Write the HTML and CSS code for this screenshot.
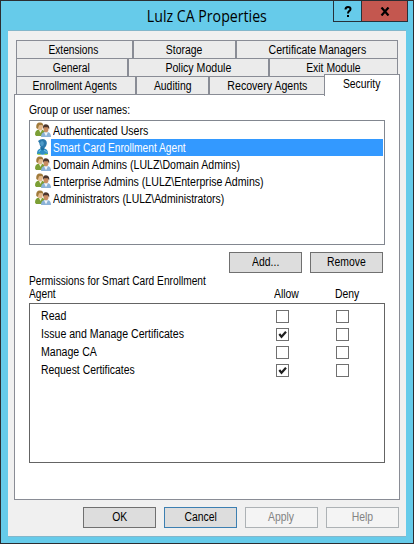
FILE: index.html
```
<!DOCTYPE html>
<html lang="en">
<head>
<meta charset="utf-8">
<title>Lulz CA Properties</title>
<link rel="stylesheet" href="styles.css">
</head>
<body>
<svg width="0" height="0" class="defs">
  <symbol id="group" viewBox="0 0 16 16">
    <path d="M0 12.500Q0 8 4 7.500h3l3 2v3.500L6 14H1z" fill="#7c9f35"/>
    <path d="M4 8l1.500 3L7 8z" fill="#eef2df"/>
    <ellipse cx="5" cy="4.600" rx="2.800" ry="3.600" fill="#e3b98c"/>
    <path d="M1.300 6Q.6.300 5 .4q4 .1 3.300 5L7.200 3 4 3.300 2.800 7z" fill="#a17a3a"/>
    <path d="M6 15q0-4.500 3.500-5h3Q16 10.500 16 15z" fill="#8bb2d8"/>
    <path d="M9 10.200l2 4 2-4z" fill="#f2f5f8"/>
    <ellipse cx="11" cy="7" rx="2.500" ry="3.200" fill="#c98d62"/>
    <path d="M8 7q-.6-4.500 3-4.700 3.900.2 3.200 5.200L12.800 5.200 9 5.300z" fill="#4a352c"/>
  </symbol>
  <symbol id="user" viewBox="0 0 16 16">
    <path d="M2 15q-.3-4.800 4-5.500h3q4.300.8 4 5.500Q7.500 16.500 2 15z" fill="#2f8fc4"/>
    <path d="M5.300 8h4.300l-.4 2.500-1.700 1-2-1z" fill="#1c6d9f"/>
    <path d="M3 2Q5 0 8 0q4 .5 3.800 4.500Q11 9 7.800 9 4.800 8.500 4.300 4z" fill="#2b78ab"/>
    <ellipse cx="7" cy="4.500" rx="1.800" ry="2.500" fill="#4f9bc8"/>
    <path d="M4 13q.6-2 2-2.200M9 11.500q2 0 3 2" stroke="#77c6e7" fill="none"/>
    <path d="M2.500 15.300h3M9.500 15.300h3" stroke="#a6d925"/>
  </symbol>
</svg>
<div class="window">
  <header class="titlebar">
    <h1><span>Lulz CA Properties</span></h1>
    <div class="controls">
      <div class="help"><svg width="8" height="11" viewBox="0 0 8 11"><path d="M1.500 3.500Q1.500 1 4 1t2.500 2Q6.500 4.200 5 5.200 4 6 4 7.500M4 9v2" fill="none" stroke="#000" stroke-width="2"/></svg></div>
      <div class="close"><svg width="10" height="9" viewBox="0 0 10 9"><path d="M1.500.5l7 8M8.500.5l-7 8" stroke="#000" stroke-width="2.200"/></svg></div>
    </div>
  </header>
  <main class="client">
    <nav class="tabs">
      <div class="row r1"><div><span class="narrow">Extensions</span></div><div><span>Storage</span></div><div><span class="wide">Certificate Managers</span></div></div>
      <div class="row r2"><div><span>General</span></div><div><span class="wide">Policy Module</span></div><div><span>Exit Module</span></div></div>
      <div class="row r3"><div><span>Enrollment Agents</span></div><div><span>Auditing</span></div><div><span class="wide">Recovery Agents</span></div><div class="active"><span>Security</span></div></div>
    </nav>
    <section class="panel">
      <div class="label"><span>Group or user names:</span></div>
      <div class="list">
        <div class="item"><svg><use href="#group"/></svg><div><span class="wide">Authenticated Users</span></div></div>
        <div class="item selected"><svg><use href="#user"/></svg><div><span class="narrow">Smart Card Enrollment Agent</span></div></div>
        <div class="item"><svg><use href="#group"/></svg><div><span class="wide">Domain Admins (LULZ\Domain Admins)</span></div></div>
        <div class="item"><svg><use href="#group"/></svg><div><span class="wide">Enterprise Admins (LULZ\Enterprise Admins)</span></div></div>
        <div class="item"><svg><use href="#group"/></svg><div><span>Administrators (LULZ\Administrators)</span></div></div>
      </div>
      <div class="actions"><button><span>Add...</span></button><button><span>Remove</span></button></div>
      <div class="permhead"><div class="who"><span class="narrow">Permissions for Smart Card Enrollment<br>Agent</span></div><div class="allow"><span>Allow</span></div><div class="deny"><span>Deny</span></div></div>
      <div class="perms">
        <div class="perm"><div class="name"><span class="wide">Read</span></div><i></i><i></i></div>
        <div class="perm"><div class="name"><span class="wide">Issue and Manage Certificates</span></div><i><svg viewBox="0 0 11 11"><path d="M2.300 5l2.200 2.700L9 2.700" fill="none" stroke="#1e1e1e" stroke-width="2.200"/></svg></i><i></i></div>
        <div class="perm"><div class="name"><span class="wide">Manage CA</span></div><i></i><i></i></div>
        <div class="perm"><div class="name"><span>Request Certificates</span></div><i><svg viewBox="0 0 11 11"><path d="M2.300 5l2.200 2.700L9 2.700" fill="none" stroke="#1e1e1e" stroke-width="2.200"/></svg></i><i></i></div>
      </div>
    </section>
    <footer class="buttons"><button><span>OK</span></button><button class="focus"><span>Cancel</span></button><button class="off"><span>Apply</span></button><button class="off"><span>Help</span></button></footer>
  </main>
</div>
</body>
</html>
```
FILE: styles.css
```
* { box-sizing: border-box; }
body { margin: 0; font: 12px/13px "Liberation Sans", sans-serif; color: #000; }
span { display: inline-block; white-space: nowrap; transform: scaleX(.867); }
.narrow { transform: scaleX(.85); }
.wide { transform: scaleX(.882); }
.defs { position: absolute; }
.window { width: 414px; height: 544px; border: 1px solid #2b2d31; background: #66cbea; padding: 0 7px; }
.titlebar { height: 29px; display: flex; position: relative; }
h1 { margin: 0; width: 398px; text-align: center; font: 16px/30px "Open Sans", sans-serif; }
h1 span { transform: scaleX(.885); }
.controls { position: absolute; right: -2px; top: 0; display: flex; height: 21px; border: 1px solid #26313a; border-top: 0; }
.controls div { display: flex; align-items: center; justify-content: center; }
.help { width: 27px; }
.close { width: 46px; background: #c4574f; border-left: 1px solid #26313a; }
.client { height: 507px; background: #f0f0f0; border-top: 1px solid #83b7cb; border-bottom: 1px solid #83b7cb; padding: 9px 6px 0; }
.tabs { padding: 0 2px; }
.row { display: flex; height: 18px; width: 382px; border: 1px solid #898c95; border-bottom: 0; background: #ebebeb; line-height: 18px; }
.row div { flex: none; text-align: center; }
.row div + div { border-left: 2px solid #898c95; }
.row div:first-child { padding-right: 2px; }
.r1 div:nth-child(1) { width: 115px; }
.r1 div:nth-child(2) { width: 103px; }
.r1 div:nth-child(3) { width: 162px; }
.r2 div:nth-child(1) { width: 110px; }
.r2 div:nth-child(2) { width: 141px; }
.r2 div:nth-child(3) { width: 129px; }
.r3 { border-right: 0; width: 381px; }
.r3 div:nth-child(1) { width: 118px; }
.r3 div:nth-child(2) { width: 73px; }
.r3 div:nth-child(3) { width: 116px; }
.r3 .active { width: 76px; height: 22px; margin-top: -3px; border: 1px solid #898c95; border-bottom: 0; background: #fff; position: relative; line-height: 19px; }
.panel { width: 386px; height: 406px; border: 1px solid #898c95; background: #fff; padding: 9px 14px 0; }
.panel span { transform-origin: 0 0; }
.label { height: 16px; }
.list { width: 356px; height: 125px; border: 1px solid #828790; padding: 1px 1px 0 5px; }
.item { display: flex; height: 17px; line-height: 19px; }
.item svg { width: 16px; height: 16px; }
.item div { flex: 1; padding-left: 2px; }
.selected div { background: #3399ff; color: #fff; }
button { width: 73px; height: 21px; padding: 0; border: 1px solid #707070; background: #ddd; font: inherit; color: #000; }
.panel button span { transform-origin: 50% 0; }
.actions { display: flex; gap: 8px; padding: 7px 0 0 200px; }
.permhead { display: flex; height: 30px; padding-top: 2px; }
.who { width: 245px; }
.allow { width: 61px; padding-top: 13px; }
.deny { padding-top: 13px; }
.perms { width: 356px; height: 160px; border: 1px solid #646464; padding: 3px 0 0 11px; }
.perm { display: flex; height: 18px; align-items: center; line-height: 18px; }
.name { flex: none; width: 235px; }
.perm i { flex: none; width: 13px; height: 13px; border: 1px solid #707070; margin-right: 47px; }
.perm i svg { display: block; width: 11px; height: 11px; }
.buttons { display: flex; gap: 8px; padding: 7px 0 0 69px; }
.focus { border-color: #3c7fb1; }
.off { border-color: #adb2b5; background: #f4f4f4; color: #838383; }
```
